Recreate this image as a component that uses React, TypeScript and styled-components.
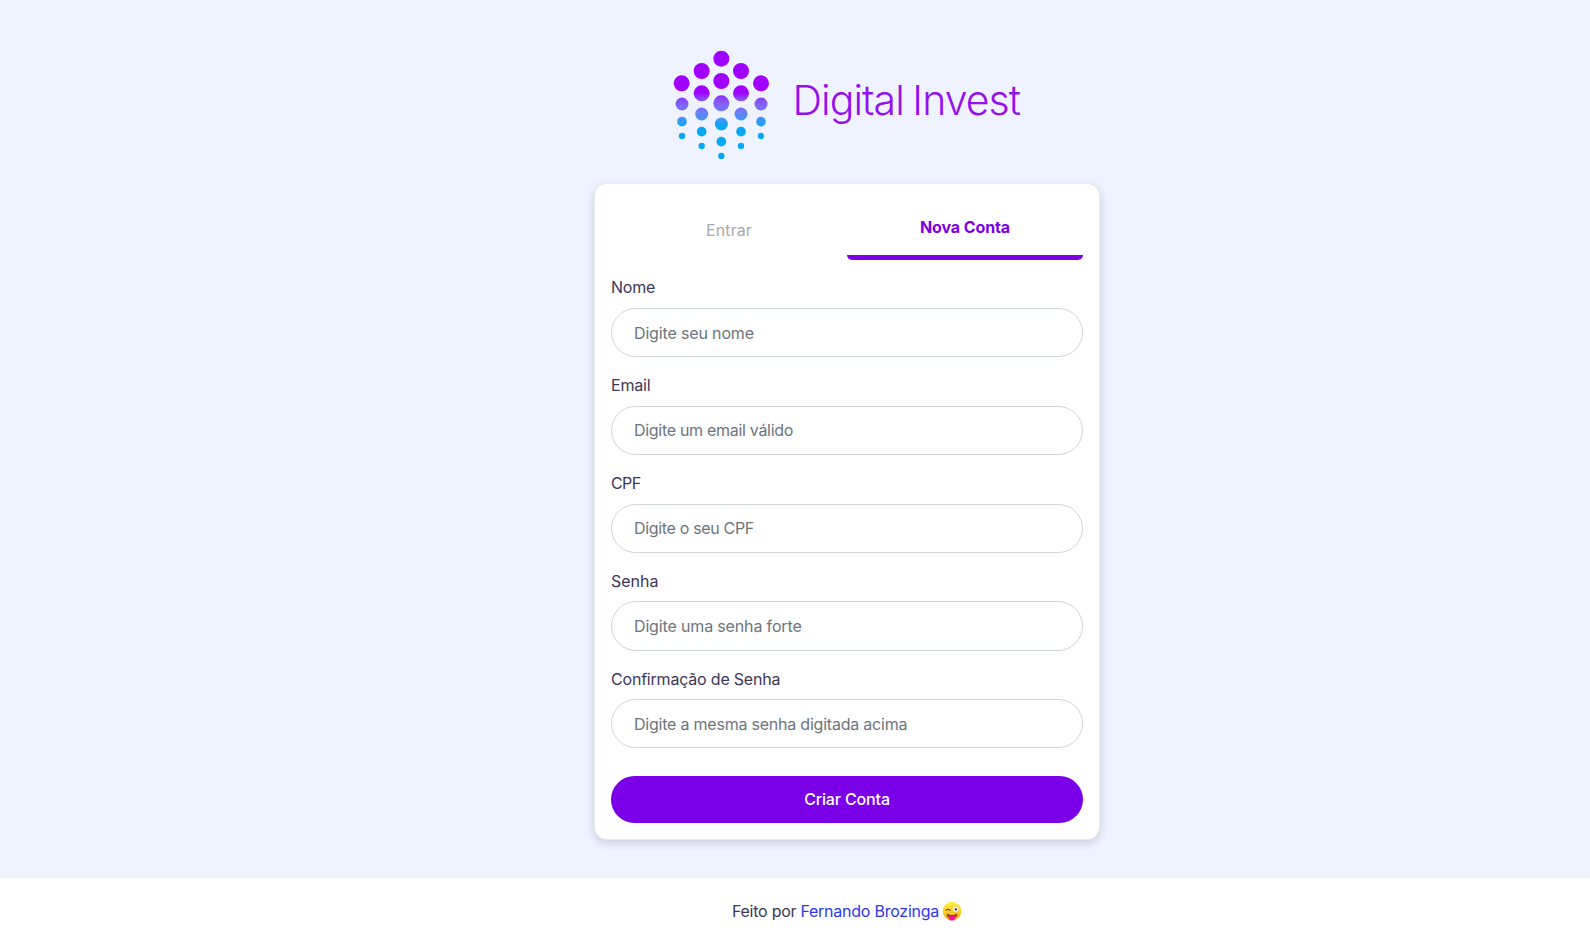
import React from "react";
import styled, { createGlobalStyle } from "styled-components";

const GlobalStyle = createGlobalStyle`
  * { box-sizing: border-box; }
  body {
    margin: 0;
    overflow: hidden;
    background: #fff;
    color: #3d3658;
    font: 400 16px/24px Inter, "Liberation Sans", sans-serif;
  }
`;

const Page = styled.div`
  height: 944px;
  display: flex;
  flex-direction: column;
`;

const Main = styled.main`
  height: 878px;
  padding: 50px 0 0 104px;
  background: #eff3ff;
  display: flex;
  flex-direction: column;
  align-items: center;
`;

const Brand = styled.header`
  width: 351px;
  height: 133px;
  display: flex;
  align-items: flex-start;
  gap: 23px;
`;

const BrandMark = styled.svg`
  flex: none;
  width: 98px;
  height: 110px;
`;

const BrandName = styled.h1`
  margin: 25px 0 0;
  color: #9412ea;
  font-size: 41px;
  font-weight: 300;
  line-height: 50px;
  letter-spacing: -0.95px;
  word-spacing: -2px;
  white-space: nowrap;
`;

const Card = styled.section`
  width: 506px;
  height: 657px;
  padding: 17px 16px 16px;
  border: 1px solid rgba(0, 0, 0, 0.08);
  border-radius: 13px;
  background: #fff;
  box-shadow: 0 3px 8px rgba(40, 40, 80, 0.19);
`;

const Tabs = styled.nav`
  height: 59px;
  display: grid;
  grid-template-columns: 1fr 1fr;
`;

const Tab = styled.button<{ $active?: boolean }>`
  padding: 0 0 2px;
  border: 0;
  border-bottom: ${(p) => (p.$active ? "5px solid #7b00e8" : "0")};
  border-radius: ${(p) => (p.$active ? "0 0 5px 5px" : "0")};
  background: none;
  color: ${(p) => (p.$active ? "#7b00e8" : "#a9a9a9")};
  font: inherit;
  font-weight: ${(p) => (p.$active ? 700 : 400)};
  letter-spacing: ${(p) => (p.$active ? "-0.1px" : "0.1px")};
`;

const Form = styled.form`
  padding-top: 15.4px;
`;

const Field = styled.div`
  display: flex;
  flex-direction: column;
  gap: 8.6px;
  margin-bottom: 15.9px;
`;

const Label = styled.label<{ $tracking: number }>`
  letter-spacing: ${(p) => p.$tracking}px;
`;

const Input = styled.input<{ $tracking: number }>`
  width: 100%;
  height: 49.3px;
  padding: 0 22px;
  border: 1px solid #ced4da;
  border-radius: 25px;
  background: #fff;
  font: inherit;
  letter-spacing: ${(p) => p.$tracking}px;
  outline: none;
  &::placeholder {
    color: #6c757d;
    opacity: 1;
  }
`;

const Submit = styled.button`
  display: block;
  width: 100%;
  height: 47px;
  margin-top: 27.6px;
  padding: 0 0 1px;
  border: 0;
  border-radius: 24px;
  background: #7b00e8;
  color: #fff;
  font: inherit;
  font-weight: 500;
  letter-spacing: -0.15px;
`;

const Footer = styled.footer`
  height: 66px;
  padding-left: 104px;
  display: flex;
  align-items: center;
  justify-content: center;
  gap: 4px;
  letter-spacing: -0.24px;
`;

const AuthorLink = styled.a`
  color: #2d37ef;
  text-decoration: none;
`;

const Emoji = styled.svg`
  width: 20px;
  height: 20px;
  margin-left: -1px;
`;

const dots: [number, number, number][] = [
  [184, 56, 24],
  [125, 93, 24], [243, 93, 24],
  [65, 130, 24], [303, 130, 24],
  [184, 123, 24],
  [125, 160, 24], [243, 160, 24],
  [184, 190, 24],
  [66, 192, 19.5], [303, 192, 19.5],
  [125, 222, 19.5], [243, 222, 19.5],
  [66, 245, 14.5], [303, 245, 14.5],
  [184, 252, 19.5],
  [125, 275, 14.5], [243, 275, 14.5],
  [66, 288, 9.5], [303, 288, 9.5],
  [184, 305, 14.5],
  [125, 318, 9.5], [243, 318, 9.5],
  [184, 348, 9.5],
];

const fields = [
  { id: "nome", label: "Nome", hint: "Digite seu nome", type: "text", lt: -0.25, ht: -0.15 },
  { id: "email", label: "Email", hint: "Digite um email válido", type: "email", lt: -0.2, ht: -0.3 },
  { id: "cpf", label: "CPF", hint: "Digite o seu CPF", type: "text", lt: -0.6, ht: -0.33 },
  { id: "senha", label: "Senha", hint: "Digite uma senha forte", type: "password", lt: 0, ht: -0.15 },
  { id: "confirmacao", label: "Confirmação de Senha", hint: "Digite a mesma senha digitada acima", type: "password", lt: -0.2, ht: -0.22 },
];

const Logo = () => (
  <BrandMark viewBox="36 30 294 330" aria-hidden>
    <defs>
      <linearGradient id="mark" gradientUnits="userSpaceOnUse" x1="0" y1="30" x2="0" y2="360">
        <stop offset="0.39" stopColor="#a000ff" />
        <stop offset="0.44" stopColor="#8b45f7" />
        <stop offset="0.5" stopColor="#8264f6" />
        <stop offset="0.58" stopColor="#6484f7" />
        <stop offset="0.65" stopColor="#309df3" />
        <stop offset="0.7" stopColor="#06a7f3" />
      </linearGradient>
    </defs>
    {dots.map(([x, y, r]) => (
      <circle key={`${x}-${y}`} cx={x} cy={y} r={r} fill="url(#mark)" />
    ))}
  </BrandMark>
);

const WinkingFace = () => (
  <Emoji viewBox="0 0 20 20" role="img" aria-label="😜">
    <defs>
      <linearGradient id="face" x1="0" y1="0" x2="0" y2="1">
        <stop offset="0" stopColor="#fff04a" />
        <stop offset="0.55" stopColor="#fdd21f" />
        <stop offset="1" stopColor="#ee9112" />
      </linearGradient>
    </defs>
    <circle cx="10" cy="10" r="9.3" fill="url(#face)" />
    <path d="M4 9.2q2-1.6 4.2.2" fill="none" stroke="#8b4a0b" strokeWidth="1.2" strokeLinecap="round" />
    <circle cx="13.7" cy="8.2" r="3" fill="#fff" stroke="#d6a04a" strokeWidth="0.5" />
    <circle cx="13.8" cy="8.4" r="1.15" fill="#222" />
    <path d="M4.6 12.8q5.4 2.4 10.8 0q-.8 4.6-5.4 4.6t-5.4-4.6z" fill="#7d2a12" />
    <path d="M6.8 14.2q3.2 .7 6.4 0v2.5q-.3 2.9-3.2 2.9t-3.2-2.9z" fill="#f71b8c" />
    <path d="M10 14.8v2.6" stroke="#c90e69" strokeWidth="0.7" />
  </Emoji>
);

export default function App() {
  return (
    <Page>
      <GlobalStyle />
      <Main>
        <Brand>
          <Logo />
          <BrandName>Digital Invest</BrandName>
        </Brand>
        <Card>
          <Tabs>
            <Tab>Entrar</Tab>
            <Tab $active>Nova Conta</Tab>
          </Tabs>
          <Form>
            {fields.map((f) => (
              <Field key={f.id}>
                <Label htmlFor={f.id} $tracking={f.lt}>{f.label}</Label>
                <Input id={f.id} type={f.type} placeholder={f.hint} $tracking={f.ht} />
              </Field>
            ))}
            <Submit type="button">Criar Conta</Submit>
          </Form>
        </Card>
      </Main>
      <Footer>
        <span>Feito por</span>
        <AuthorLink href="#">Fernando Brozinga</AuthorLink>
        <WinkingFace />
      </Footer>
    </Page>
  );
}
